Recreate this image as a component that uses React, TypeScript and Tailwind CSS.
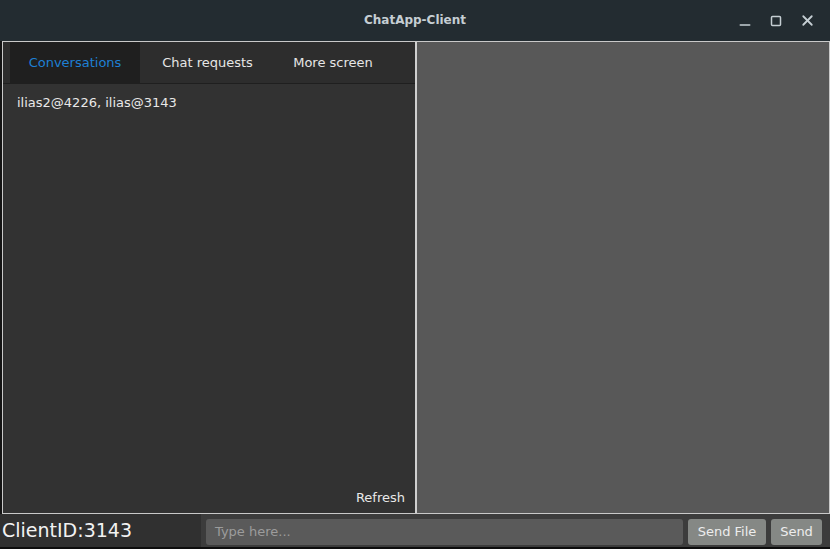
import { Minus, Square, X } from 'lucide-react';

const font = { fontFamily: '"DejaVu Sans", "Noto Sans", sans-serif' };

function TitleBar() {
  return (
    <div className="relative h-[41px] shrink-0 bg-[#232c31] flex items-center justify-center">
      <span className="text-[12px] font-bold text-[#c5ced3] -translate-y-[1px]">ChatApp-Client</span>
      <div className="absolute right-[14px] top-0 h-full flex items-center gap-[17px] text-[#c5ced3]">
        <Minus className="w-[16px] h-[16px] translate-y-[4px]" strokeWidth={2.5} />
        <Square className="w-[12px] h-[12px]" strokeWidth={3} absoluteStrokeWidth />
        <X className="w-[17px] h-[17px]" strokeWidth={2.5} />
      </div>
    </div>
  );
}

function Tabs() {
  return (
    <div className="h-[42px] shrink-0 bg-[#2d2d2d] border-b border-[#1f1f1f] flex pl-[7px] text-[13px]">
      <div className="w-[130px] h-full bg-[#1f1f1f] flex items-center justify-center text-[#1e7fd4]">
        Conversations
      </div>
      <div className="w-[135px] h-full flex items-center justify-center text-[#e6e6e6]">Chat requests</div>
      <div className="w-[116px] h-full flex items-center justify-center text-[#e6e6e6]">More screen</div>
    </div>
  );
}

export default function App() {
  return (
    <div className="w-[830px] h-[549px] bg-[#0d0d0d] flex flex-col overflow-hidden" style={font}>
      <TitleBar />
      <div className="flex flex-1 min-h-0">
        <div className="w-[2px] bg-[#141414]" />
        <div className="flex-1 flex border-t border-l border-r border-b border-[#c9c9c9]">
          <div className="w-[414px] flex flex-col bg-[#323232] border-r-2 border-[#cfcfcf]">
            <Tabs />
            <div className="flex-1 flex flex-col justify-between pl-[14px] pr-[10px] pt-[9px] pb-[6px] text-[13px] text-[#e8e8e8]">
              <div>ilias2@4226, ilias@3143</div>
              <div className="self-end">Refresh</div>
            </div>
          </div>
          <div className="flex-1 bg-[#585858]" />
        </div>
      </div>
      <div className="h-[33px] shrink-0 flex">
        <div className="w-[201px] bg-[#303030] flex items-center pl-[2px] text-[19px] text-[#f2f2f2]">
          ClientID:3143
        </div>
        <div className="flex-1 bg-[#3c3c3c] flex items-start pt-[5px] gap-[5px] pl-[5px] pr-[7px]">
          <div className="w-[477px] h-[26px] rounded-[3px] bg-[#5a5a5a] flex items-center pl-[9px] text-[13px] text-[#9c9c9c]">
            Type here...
          </div>
          <button className="w-[78px] h-[26px] rounded-[3px] bg-[#858885] text-[13px] text-[#ededed]">Send File</button>
          <button className="w-[51px] h-[26px] rounded-[3px] bg-[#858885] text-[13px] text-[#ededed]">Send</button>
        </div>
      </div>
      <div className="h-[2px] shrink-0 bg-[#0d0d0d]" />
    </div>
  );
}
